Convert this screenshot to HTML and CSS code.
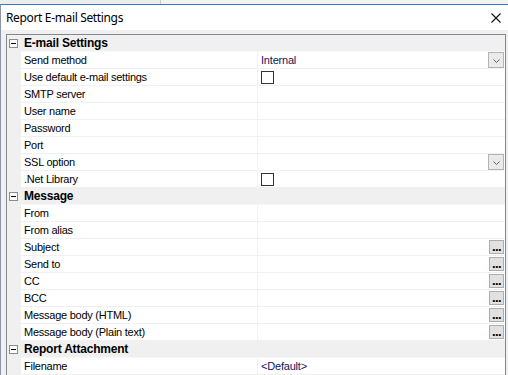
FILE: index.html
```html
<!DOCTYPE html>
<html lang="en">
<head>
  <meta charset="UTF-8">
  <title>Report E-mail Settings</title>
  <link rel="stylesheet" href="styles.css">
</head>
<body>
  <div class="desk"></div>
  <div class="window">
    <div class="titlebar">
      <span class="title">Report E-mail Settings</span>
      <svg class="close" width="10" height="10" viewBox="0 0 10 10"><path d="M0.5 0.5 L9.5 9.5 M9.5 0.5 L0.5 9.5" stroke="#111" stroke-width="1.1" fill="none"/></svg>
    </div>
    <div class="content">
      <div class="grid">
        <div class="row category">
          <div class="margin"><span class="toggle"></span></div>
          <div class="cat-name">E-mail Settings</div>
        </div>
        <div class="row">
          <div class="margin"></div>
          <div class="label">Send method</div>
          <div class="value"><span class="text">Internal</span><span class="drop"><svg width="7" height="4" viewBox="0 0 7 4"><path d="M0.5 0.5 L3.5 3.5 L6.5 0.5" stroke="#606060" fill="none"/></svg></span></div>
        </div>
        <div class="row">
          <div class="margin"></div>
          <div class="label">Use default e-mail settings</div>
          <div class="value"><span class="check"></span></div>
        </div>
        <div class="row">
          <div class="margin"></div>
          <div class="label">SMTP server</div>
          <div class="value"></div>
        </div>
        <div class="row">
          <div class="margin"></div>
          <div class="label">User name</div>
          <div class="value"></div>
        </div>
        <div class="row">
          <div class="margin"></div>
          <div class="label">Password</div>
          <div class="value"></div>
        </div>
        <div class="row">
          <div class="margin"></div>
          <div class="label">Port</div>
          <div class="value"></div>
        </div>
        <div class="row">
          <div class="margin"></div>
          <div class="label">SSL option</div>
          <div class="value"><span class="text"></span><span class="drop"><svg width="7" height="4" viewBox="0 0 7 4"><path d="M0.5 0.5 L3.5 3.5 L6.5 0.5" stroke="#606060" fill="none"/></svg></span></div>
        </div>
        <div class="row">
          <div class="margin"></div>
          <div class="label">.Net Library</div>
          <div class="value"><span class="check"></span></div>
        </div>

        <div class="row category">
          <div class="margin"><span class="toggle"></span></div>
          <div class="cat-name">Message</div>
        </div>
        <div class="row">
          <div class="margin"></div>
          <div class="label">From</div>
          <div class="value"></div>
        </div>
        <div class="row">
          <div class="margin"></div>
          <div class="label">From alias</div>
          <div class="value"></div>
        </div>
        <div class="row">
          <div class="margin"></div>
          <div class="label">Subject</div>
          <div class="value"><span class="text"></span><span class="dots">...</span></div>
        </div>
        <div class="row">
          <div class="margin"></div>
          <div class="label">Send to</div>
          <div class="value"><span class="text"></span><span class="dots">...</span></div>
        </div>
        <div class="row">
          <div class="margin"></div>
          <div class="label">CC</div>
          <div class="value"><span class="text"></span><span class="dots">...</span></div>
        </div>
        <div class="row">
          <div class="margin"></div>
          <div class="label">BCC</div>
          <div class="value"><span class="text"></span><span class="dots">...</span></div>
        </div>
        <div class="row">
          <div class="margin"></div>
          <div class="label">Message body (HTML)</div>
          <div class="value"><span class="text"></span><span class="dots">...</span></div>
        </div>
        <div class="row">
          <div class="margin"></div>
          <div class="label">Message body (Plain text)</div>
          <div class="value"><span class="text"></span><span class="dots">...</span></div>
        </div>

        <div class="row category">
          <div class="margin"><span class="toggle"></span></div>
          <div class="cat-name">Report Attachment</div>
        </div>
        <div class="row">
          <div class="margin"></div>
          <div class="label">Filename</div>
          <div class="value"><span class="text">&lt;Default&gt;</span></div>
        </div>
      </div>
    </div>
  </div>
</body>
</html>
```

FILE: styles.css
```css
body {
  margin: 0;
  background: #f0f0f0;
  font-family: "Liberation Sans", Arial, sans-serif;
  font-size: 11px;
  color: #000;
  overflow: hidden;
}
.desk {
  height: 4px;
  background: linear-gradient(to right, #ececec 160px, #c8c8c8 160px, #c8c8c8 161px, #f2f2f2 161px);
}
.window {
  border-top: 1px solid #2b7ad0;
  border-left: 1px solid #8a96a6;
  background: #f0f0f0;
}
.titlebar {
  height: 25px;
  background: #fff;
  display: flex;
  align-items: center;
  justify-content: space-between;
  padding: 0 7px 0 5px;
}
.title {
  font-family: "Noto Sans", "Open Sans", sans-serif;
  font-size: 12px;
  letter-spacing: -0.35px;
  color: #000;
}
.close {
  display: block;
}
.content {
  padding: 4px 2px 0 5px;
}
.grid {
  border: 1px solid #828790;
  border-bottom: none;
  background: #fff;
}
.row {
  display: flex;
  height: 17px;
}
.margin {
  width: 14px;
  flex: none;
  background: #f0f0f0;
  position: relative;
}
.label {
  width: 233px;
  flex: none;
  padding-left: 3px;
  line-height: 16px;
  letter-spacing: -0.25px;
  border-bottom: 1px solid #f0f0f0;
  white-space: nowrap;
}
.value {
  flex: 1;
  display: flex;
  border-left: 1px solid #f0f0f0;
  border-bottom: 1px solid #f0f0f0;
  line-height: 16px;
}
.value .text {
  flex: 1;
  padding-left: 3px;
  letter-spacing: -0.2px;
  color: #14145a;
}
.category {
  background: #f0f0f0;
}
.category .cat-name {
  flex: 1;
  padding-left: 3px;
  font-weight: bold;
  font-size: 12px;
  letter-spacing: -0.2px;
  line-height: 16px;
  border-bottom: 1px solid #f7f7f7;
}
.toggle {
  position: absolute;
  left: 2px;
  top: 4px;
  width: 7px;
  height: 7px;
  border: 1px solid #8c8c8c;
  background: #fff;
}
.toggle::after {
  content: "";
  position: absolute;
  left: 1px;
  top: 3px;
  width: 5px;
  height: 1px;
  background: #000;
}
.drop {
  width: 14px;
  height: 13px;
  margin-right: 1px;
  border: 1px solid #b4b4b4;
  background: #eaeaea;
  display: flex;
  align-items: center;
  justify-content: center;
  padding-top: 1px;
  box-sizing: content-box;
}
.check {
  width: 11px;
  height: 11px;
  margin: 2px 0 0 3px;
  border: 1px solid #333;
  background: #fff;
}
.dots {
  width: 13px;
  height: 12px;
  margin: 1px 1px 0 0;
  border: 1px solid #adadad;
  background: #e1e1e1;
  font-weight: bold;
  font-size: 13px;
  line-height: 12px;
  text-align: center;
  letter-spacing: -0.6px;
  overflow: hidden;
}
```
